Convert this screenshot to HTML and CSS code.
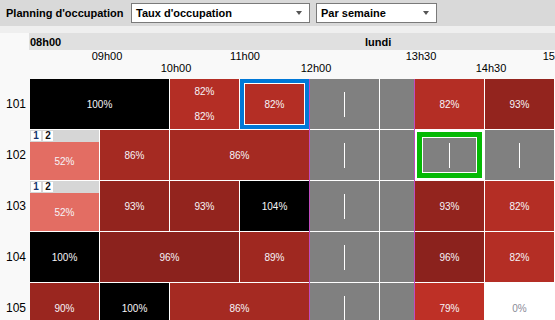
FILE: index.html
```html
<!DOCTYPE html>
<html lang="fr">
<head>
<meta charset="utf-8">
<title>Planning d'occupation</title>
<link rel="stylesheet" href="styles.css">
</head>
<body>
<div class="toolbar">
  <span class="title">Planning d'occupation</span>
  <div class="select sel-rate"><span>Taux d'occupation</span><i class="caret"></i></div>
  <div class="select sel-period"><span>Par semaine</span><i class="caret"></i></div>
</div>
<div class="band"></div>
<div class="dayhead"><span class="start">08h00</span><span class="day">lundi</span></div>
<div class="ticks">
  <span class="t-0900">09h00</span>
  <span class="t-1100">11h00</span>
  <span class="t-1330">13h30</span>
  <span class="t-1530">15h30</span>
</div>
<div class="ticks">
  <span class="t-1000">10h00</span>
  <span class="t-1200">12h00</span>
  <span class="t-1430">14h30</span>
</div>
<div class="board">
  <div class="rowlabels">
    <div>101</div>
    <div>102</div>
    <div>103</div>
    <div>104</div>
    <div>105</div>
  </div>
  <div class="grid">
    <!-- 101 -->
    <div class="cell w4 full">100%</div>
    <div class="cell w2 r82 split"><span>82%</span><span>82%</span></div>
    <div class="cell w2 r82 sel-blue">82%</div>
    <div class="cell w2 off"><i class="tick"></i></div>
    <div class="cell w1 off"></div>
    <div class="cell w2 r82">82%</div>
    <div class="cell w2 r93">93%</div>
    <!-- 102 -->
    <div class="cell w2 tagged"><div class="badges"><b class="b1">1</b><b class="b2">2</b></div><div class="fill">52%</div></div>
    <div class="cell w2 r86">86%</div>
    <div class="cell w4 r86">86%</div>
    <div class="cell w2 off"><i class="tick"></i></div>
    <div class="cell w1 off"></div>
    <div class="cell w2 off sel-green"><i class="tick"></i></div>
    <div class="cell w2 off"><i class="tick"></i></div>
    <!-- 103 -->
    <div class="cell w2 tagged"><div class="badges"><b class="b1">1</b><b class="b2">2</b></div><div class="fill">52%</div></div>
    <div class="cell w2 r93">93%</div>
    <div class="cell w2 r93">93%</div>
    <div class="cell w2 full">104%</div>
    <div class="cell w2 off"><i class="tick"></i></div>
    <div class="cell w1 off"></div>
    <div class="cell w2 r93">93%</div>
    <div class="cell w2 r82">82%</div>
    <!-- 104 -->
    <div class="cell w2 full">100%</div>
    <div class="cell w4 r96">96%</div>
    <div class="cell w2 r89">89%</div>
    <div class="cell w2 off"><i class="tick"></i></div>
    <div class="cell w1 off"></div>
    <div class="cell w2 r96">96%</div>
    <div class="cell w2 r82">82%</div>
    <!-- 105 -->
    <div class="cell w2 r90">90%</div>
    <div class="cell w2 full">100%</div>
    <div class="cell w4 r86">86%</div>
    <div class="cell w2 off"><i class="tick"></i></div>
    <div class="cell w1 off"></div>
    <div class="cell w2 r79">79%</div>
    <div class="cell w2 empty">0%</div>
    <div class="marker m-noon"></div>
    <div class="marker m-1330"></div>
  </div>
</div>
</body>
</html>
```
FILE: styles.css
```css
html, body {
  margin: 0;
  padding: 0;
}
body {
  width: 555px;
  height: 320px;
  overflow: hidden;
  background: #f9f9f9;
  font-family: "Liberation Sans", Arial, sans-serif;
  color: #000;
}
.toolbar {
  height: 26px;
  box-sizing: border-box;
  background: #d9d9d9;
  display: flex;
  align-items: center;
  padding-left: 6px;
}
.title {
  width: 125px;
  flex: none;
  font-weight: bold;
  font-size: 11px;
}
.select {
  height: 20px;
  box-sizing: border-box;
  border: 1px solid #7a7a7a;
  background: #fff;
  display: flex;
  align-items: center;
  justify-content: space-between;
  padding: 0 7px 0 4px;
  font-weight: bold;
  font-size: 11px;
  flex: none;
}
.sel-rate { width: 179px; }
.sel-period { width: 121px; margin-left: 6px; }
.caret {
  width: 0;
  height: 0;
  border-left: 3px solid transparent;
  border-right: 3px solid transparent;
  border-top: 4px solid #555;
}
.band {
  height: 7px;
  background: #efefef;
}
.dayhead {
  height: 17px;
  box-sizing: border-box;
  margin-left: 29px;
  padding: 2px 0 0 1px;
  background: #e0e0e0;
  display: flex;
  font-weight: bold;
  font-size: 11px;
  line-height: 15px;
}
.dayhead .start {
  width: 335px;
  flex: none;
}
.ticks {
  height: 12px;
  display: flex;
  font-size: 11px;
  line-height: 12px;
  white-space: nowrap;
}
.ticks span {
  width: 40px;
  flex: none;
  text-align: center;
}
.t-0900 { margin-left: 87px; }
.t-1100 { margin-left: 98px; }
.t-1330 { margin-left: 136px; }
.t-1530 { margin-left: 97px; }
.t-1000 { margin-left: 156px; }
.t-1200 { margin-left: 100px; }
.t-1430 { margin-left: 135px; }

.board {
  display: flex;
  margin-top: 5px;
}
.rowlabels {
  width: 30px;
  flex: none;
  display: flex;
  flex-direction: column;
  gap: 1px;
  font-size: 12px;
}
.rowlabels div {
  height: 50px;
  display: flex;
  align-items: center;
  padding-left: 6px;
}
.grid {
  position: relative;
  flex: none;
  display: grid;
  grid-template-columns: repeat(15, 34px);
  grid-auto-rows: 50px;
  gap: 1px;
  padding-right: 1px;
  background: #fff;
}
.cell {
  display: flex;
  align-items: center;
  justify-content: center;
  color: #f6f4f8;
  font-size: 10px;
}
.w1 { grid-column: span 1; }
.w2 { grid-column: span 2; }
.w4 { grid-column: span 4; }

.full { background: #000; }
.r79 { background: #be3026; }
.r82 { background: #b42e25; }
.r86 { background: #a52a22; }
.r89 { background: #9f2820; }
.r90 { background: #9a261f; }
.r93 { background: #93241e; }
.r96 { background: #8b221d; }
.off { background: #808080; }
.empty { background: #fff; color: #8a8a98; }

.split {
  flex-direction: column;
  align-items: stretch;
}
.split span {
  flex: 1;
  display: flex;
  align-items: center;
  justify-content: center;
}
.tick {
  width: 1px;
  height: 25px;
  background: #fff;
}
.sel-blue {
  box-shadow: inset 0 0 0 4px #0078d7, inset 0 0 0 5px #fff;
}
.sel-green {
  box-shadow: inset 0 0 0 2px #fff, inset 0 0 0 7px #05b905, inset 0 0 0 8px #fff;
}
.tagged {
  flex-direction: column;
  align-items: stretch;
}
.badges {
  height: 12px;
  box-sizing: border-box;
  padding: 1px 0 0 1px;
  background: #d6d6d6;
  display: flex;
  gap: 2px;
}
.badges b {
  width: 10px;
  height: 10px;
  background: #fff;
  font-size: 10px;
  line-height: 10px;
  text-align: center;
}
.b1 { color: #17366e; }
.b2 { color: #111; }
.fill {
  flex: 1;
  background: #e36d63;
  display: flex;
  align-items: center;
  justify-content: center;
}
.marker {
  position: absolute;
  top: 0;
  bottom: 0;
  width: 1px;
  background: #c04cc0;
}
.m-noon { left: 279px; }
.m-1330 { left: 384px; }
```
